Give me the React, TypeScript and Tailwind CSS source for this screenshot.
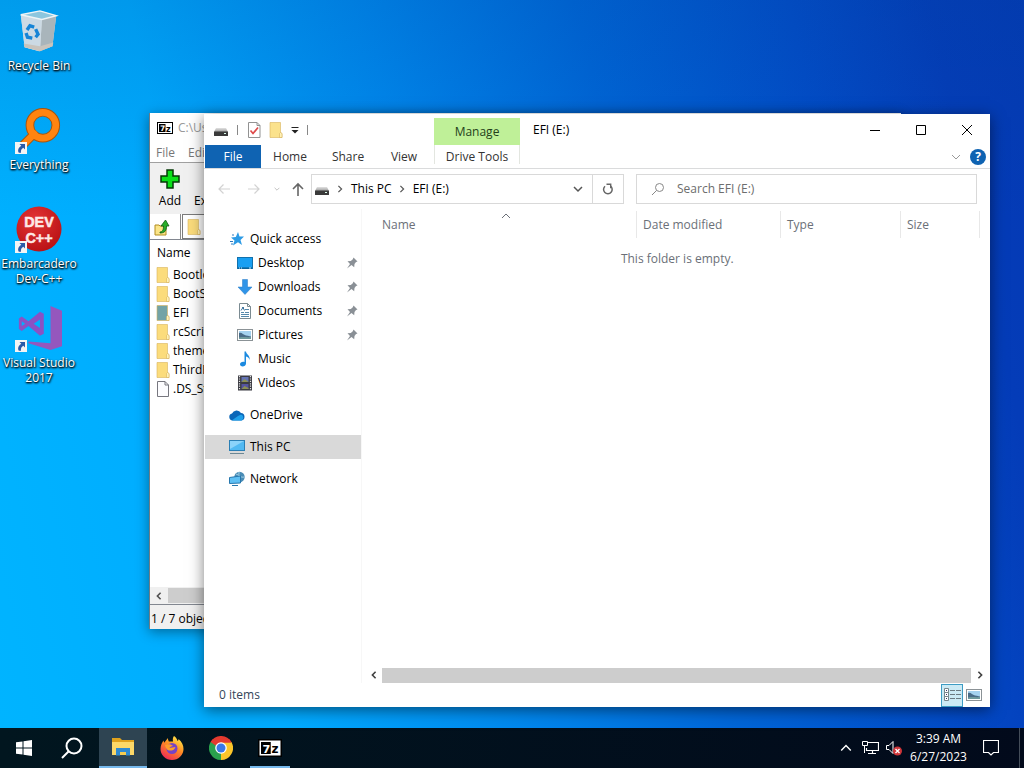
import type { ReactNode } from 'react';

const SevenZipIcon = ({ className }: { className?: string }) => (
  <svg viewBox="0 0 32 24" className={className}>
    <rect x="1" y="1" width="30" height="22" fill="#fff" stroke="#000" strokeWidth="2" />
    <rect x="4" y="4" width="13" height="16" fill="#000" />
    <text x="6" y="18" fontSize="15" fontWeight="900" fontFamily="DejaVu Sans" fill="#fff">7</text>
    <text x="18" y="19" fontSize="16" fontWeight="900" fontFamily="DejaVu Sans" fill="#000">z</text>
  </svg>
);

const DriveIcon = () => (
  <svg viewBox="0 0 16 16" className="h-4 w-4 shrink-0">
    <defs>
      <linearGradient id="drive" x1="0" y1="0" x2="0" y2="1">
        <stop offset="0" stopColor="#e2e2e2" />
        <stop offset="1" stopColor="#9a9a9a" />
      </linearGradient>
    </defs>
    <path d="M3 6h10l2 4H1z" fill="url(#drive)" />
    <rect x="1" y="9.500" width="14" height="4.500" rx="0.500" fill="#3a3a3a" />
    <rect x="11" y="11" width="2" height="1" fill="#dfe" />
  </svg>
);

const FolderIcon = ({ color = '#fbdc7c' }: { color?: string }) => (
  <svg viewBox="0 0 14 16" className="h-4 w-3.5 shrink-0">
    <path d="M1 0.500h10.500v10l1.500 1v4H1z" fill={color} stroke="#d8b45c" strokeWidth="0.600" />
    <path d="M11.500 10.500l1.500 1v4h-2.500v-4z" fill="#fff2b8" stroke="#d2a94c" strokeWidth="0.500" />
  </svg>
);

const FileIcon = () => (
  <svg viewBox="0 0 14 16" className="h-4 w-3.5 shrink-0">
    <path d="M1.500 0.500h7.500l3.500 3.500v11.500h-11z" fill="#fdfdff" stroke="#77777f" />
    <path d="M9 0.500v3.500h3.500" fill="none" stroke="#77777f" />
  </svg>
);

const ShortcutArrow = () => (
  <svg viewBox="0 0 12 12" className="absolute bottom-0 left-0 h-3 w-3">
    <rect width="12" height="12" fill="#f4f4f4" />
    <path d="M4.500 2h5.500v5.500L8.300 5.800C6.300 7 5.700 8.500 6 10.800H3.800C2.300 8.500 3.500 5.500 6.300 3.800z" fill="#2a5aa8" />
  </svg>
);

const RecycleBinIcon = () => (
  <svg viewBox="0 0 48 48" className="h-12 w-12">
    <path d="M5 7l21-4 16 5-4 32-14 5L9 41z" fill="#d5dde1" />
    <path d="M27 12l15-4-4 32-13 5z" fill="#a9b5bb" />
    <path d="M5 7l22 5-2 33L9 41z" fill="#ccdae4" />
    <path d="M5 7l20-4 17 5-15 4z" fill="#8cc6de" stroke="#eef4f6" strokeWidth="1.500" />
    <path d="M8 37l17 3 14-4-1 4-13 5-16-4z" fill="#c9c4bd" />
    <g fill="none" stroke="#1684d6" strokeWidth="3.500">
      <path d="M11.500 23l3-4.500 4.500 1.500" />
      <path d="M20.500 22l2.500 5.500-2.500 3" />
      <path d="M17 31.500l-5-1-1.500-4.500" />
    </g>
  </svg>
);

const EverythingIcon = () => (
  <svg viewBox="0 0 48 48" className="h-12 w-12">
    <path d="M18 29L6 41" stroke="#a8540c" strokeWidth="9" strokeLinecap="round" />
    <circle cx="28" cy="19" r="13.500" fill="none" stroke="#a8540c" strokeWidth="9" />
    <path d="M19 28L6 41" stroke="#ff8410" strokeWidth="7" strokeLinecap="round" />
    <circle cx="28" cy="19" r="13.500" fill="none" stroke="#ff8410" strokeWidth="7" />
  </svg>
);

const DevCppIcon = () => (
  <svg viewBox="0 0 48 48" className="h-12 w-12">
    <defs>
      <radialGradient id="dev" cx="0.4" cy="0.3" r="0.8">
        <stop offset="0" stopColor="#e33434" />
        <stop offset="1" stopColor="#b50e12" />
      </radialGradient>
    </defs>
    <circle cx="24" cy="24" r="23.500" fill="url(#dev)" />
    <g fill="#fde8e6" stroke="#fde8e6" strokeWidth="0.500" fontFamily="Liberation Sans" fontWeight="700" textAnchor="middle" fontSize="15">
      <text x="24" y="22">DEV</text>
      <text x="24" y="39">C++</text>
    </g>
  </svg>
);

const VisualStudioIcon = () => (
  <svg viewBox="0 0 48 48" className="h-12 w-12">
    <path d="M36 1l12 5v37l-12 4-23-7v-2l23 2z" fill="#9557bd" />
    <path fillRule="evenodd" d="M3 14l3-2 7 5L25 7l4 2v21l-4 2-12-10-7 5-3-2zm3 3v5l3.500-2.500zm19-2l-6.500 4.500L25 24z" fill="#8a52c4" />
  </svg>
);

const StarIcon = () => (
  <svg viewBox="0 0 16 16" className="h-4 w-4 shrink-0">
    <path d="M9 1l1.500 4.500L15 5.500l-3.500 3.500 1.500 5-4-2.800L4 14.500l1.500-5L2 6.500l4.800-.5z" fill="#2d9be5" />
    <path d="M1 10.500h3M2 13h2M3 4h2" stroke="#2d78be" />
  </svg>
);

const DesktopIcon = () => (
  <svg viewBox="0 0 16 16" className="h-4 w-4 shrink-0">
    <rect x="0.500" y="2.500" width="15" height="11" fill="#189ff2" stroke="#1171ad" />
    <path d="M1 13h14" stroke="#075585" />
    <path d="M2 13h1M4 13h1M12 13h2" stroke="#c3e8ff" />
  </svg>
);

const DownloadIcon = () => (
  <svg viewBox="0 0 16 16" className="h-4 w-4 shrink-0">
    <path d="M5.500 0.500h5v7.500H15l-7 7.500L1 8h4.500z" fill="#2f94e8" stroke="#2679c4" strokeWidth="0.500" />
  </svg>
);

const DocumentIcon = () => (
  <svg viewBox="0 0 16 16" className="h-4 w-4 shrink-0">
    <path d="M2.500 0.500h8l3 3v12h-11z" fill="#fff" stroke="#7b8b92" />
    <path d="M10.500 0.500v3h3" fill="none" stroke="#7b8b92" />
    <path d="M5 4.500h2M8 6.500h4M4 9.500h3M8 9.500h4M4 11.500h8M4 13.500h8" stroke="#5588aa" />
    <path d="M4 7.500L6 4.500l1.500 3" fill="none" stroke="#356f9c" />
  </svg>
);

const PictureIcon = () => (
  <svg viewBox="0 0 16 16" className="h-4 w-4 shrink-0">
    <rect x="0.500" y="2.500" width="15" height="11" fill="#fff" stroke="#8b9296" />
    <rect x="2" y="4" width="12" height="8" fill="#a5d2ef" />
    <path d="M2 6c3-1 4 2 7 2.500s3 .5 5 1V11H2z" fill="#4a6c88" />
    <path d="M2 10.500c4-1 8 0 12-.5v2H2z" fill="#6f9a9c" />
  </svg>
);

const MusicIcon = () => (
  <svg viewBox="0 0 16 16" className="h-4 w-4 shrink-0">
    <path d="M7.500 0.500h1.500c.2 3 4.500 4 3.500 8.500-.3-2-1.500-3-3.500-3.500v7C9 16 3 16.500 3 13.300c0-2 2.500-3 4.500-2.300z" fill="#1b8ae0" />
  </svg>
);

const VideoIcon = () => (
  <svg viewBox="0 0 16 16" className="h-4 w-4 shrink-0">
    <rect x="1" y="0.500" width="14" height="15" fill="#3b3b42" />
    <path d="M2.500 1v14M13.500 1v14" stroke="#e3e3e3" strokeWidth="1.200" strokeDasharray="1.200 1.200" />
    <rect x="4.500" y="2" width="7" height="5" fill="#6473b4" />
    <rect x="4.500" y="9" width="7" height="5" fill="#5655a0" />
    <path d="M4.500 7l3-3 4 3zM4.500 14l3-3 4 2v1z" fill="#8d9152" />
  </svg>
);

const OneDriveIcon = () => (
  <svg viewBox="0 0 16 16" className="h-4 w-4 shrink-0">
    <path d="M3.500 13.500A3.500 3.500 0 013 6.600 5 5 0 0112 6a3.800 3.800 0 01.5 7.500z" fill="#0a66b8" />
    <path d="M3 13.200L9 9l3-1.500a3.200 3.200 0 01.5 6H3.500z" fill="#1fa0ea" />
  </svg>
);

const ComputerIcon = () => (
  <svg viewBox="0 0 16 16" className="h-4 w-4 shrink-0">
    <rect x="0.500" y="1.500" width="15" height="10" fill="#51b9f2" stroke="#2a7fb5" />
    <path d="M1 2h14L1 10z" fill="#8bd3fa" />
    <path d="M1 14.500h14" stroke="#6c8794" />
  </svg>
);

const NetworkIcon = () => (
  <svg viewBox="0 0 16 16" className="h-4 w-4 shrink-0">
    <circle cx="10.500" cy="6" r="5.200" fill="#4a8cb5" />
    <path d="M7 3c3 1 5 4 8 3M10 1c-1 3 2 7 1 10" stroke="#a6d2e7" fill="none" />
    <path d="M0.500 6.500l11-1.500v7l-11 .5z" fill="#5fc0f4" stroke="#2777ad" />
    <path d="M3 14.500h6" stroke="#2777ad" />
  </svg>
);

const PinIcon = () => (
  <svg viewBox="0 0 12 12" className="h-3 w-3 shrink-0">
    <path d="M7.500 0.500l4 4-1.500.5L8.500 7l-.3 3.300L5.500 8 1 11.500 4 7 1.500 4.300l3.300-.3L6.800 2.300z" fill="#8a9096" />
  </svg>
);

const Chevron = ({ d, className, width = 1.5 }: { d: string; className: string; width?: number }) => (
  <svg viewBox="0 0 10 10" className={className}>
    <path d={d} fill="none" stroke="currentColor" strokeWidth={width} />
  </svg>
);

const LEFT = 'M7 1L3 5l4 4';
const RIGHT = 'M3 1l4 4-4 4';
const UP = 'M1 7l4-4 4 4';
const DOWN = 'M1 3l4 4 4-4';

const desktopItems: { label: string; icon: ReactNode; shortcut: boolean }[] = [
  { label: 'Recycle Bin', icon: <RecycleBinIcon />, shortcut: false },
  { label: 'Everything', icon: <EverythingIcon />, shortcut: true },
  { label: 'Embarcadero Dev-C++', icon: <DevCppIcon />, shortcut: true },
  { label: 'Visual Studio 2017', icon: <VisualStudioIcon />, shortcut: true },
];

const archiveRows = [
  { name: 'Bootloader', kind: 'folder' },
  { name: 'BootSector', kind: 'folder' },
  { name: 'EFI', kind: 'selected' },
  { name: 'rcScripts', kind: 'folder' },
  { name: 'themes', kind: 'folder' },
  { name: 'ThirdParty', kind: 'folder' },
  { name: '.DS_Store', kind: 'file' },
];

const quickAccess: { label: string; icon: ReactNode; pinned: boolean }[] = [
  { label: 'Desktop', icon: <DesktopIcon />, pinned: true },
  { label: 'Downloads', icon: <DownloadIcon />, pinned: true },
  { label: 'Documents', icon: <DocumentIcon />, pinned: true },
  { label: 'Pictures', icon: <PictureIcon />, pinned: true },
  { label: 'Music', icon: <MusicIcon />, pinned: false },
  { label: 'Videos', icon: <VideoIcon />, pinned: false },
];

function DesktopIcons() {
  return (
    <div className="flex w-[78px] flex-col pt-[7px]">
      {desktopItems.map((item) => (
        <button key={item.label} type="button" className="flex h-[99px] flex-col items-center gap-[3px]">
          <span className="relative h-12 w-12 shrink-0">
            <span className="flex h-12 w-12 items-center justify-center p-px">{item.icon}</span>
            {item.shortcut && <ShortcutArrow />}
          </span>
          <span className="text-center leading-[15px] text-white [text-shadow:1px_1px_2px_#000,0_1px_2px_#000]">{item.label}</span>
        </button>
      ))}
    </div>
  );
}

function ArchiveWindow() {
  return (
    <section className="absolute top-[113px] right-[123px] bottom-[99px] left-[149px] flex flex-col overflow-hidden border-l border-[#6f7b84] bg-[#f0f0f0] text-black shadow-[0_3px_12px_rgba(0,0,0,0.4)]">
      <header className="flex h-[30px] shrink-0 items-center gap-[5px] bg-white pl-[7px] text-[#999]">
        <SevenZipIcon className="h-3 w-4" />
        <span>C:\Users\</span>
      </header>
      <nav className="flex h-5 shrink-0 items-center gap-[13px] border-b border-[#a0a0a0] bg-white pl-1.5 text-[#777]">
        <button type="button">File</button>
        <button type="button">Edit</button>
      </nav>
      <div className="flex h-[51px] shrink-0 gap-3 pt-1.5 pl-2">
        <button type="button" className="flex w-6 flex-col items-center gap-1">
          <svg viewBox="0 0 20 20" className="h-5 w-5">
            <path d="M7 1h6v6h6v6h-6v6H7v-6H1V7h6z" fill="#0be01a" stroke="#043a07" strokeWidth="1.500" />
          </svg>
          Add
        </button>
        <button type="button" className="flex flex-col items-center justify-end pb-[5px]">Extract</button>
      </div>
      <div className="flex h-[26px] shrink-0 border-b border-[#828790] bg-white">
        <button type="button" aria-label="Up one level" className="flex w-[31px] items-center border-r border-[#8a8a8a] pl-1">
          <svg viewBox="0 0 16 18" className="h-[18px] w-4">
            <path d="M1 7h4l1 1h6v9H1z" fill="#fbe588" stroke="#b28d20" />
            <path d="M6 14c3 0 3.500-3 3.500-6H7l4.500-6L15 8h-2.500c0 5-2 7-6.500 7z" fill="#28ad28" stroke="#0d5b12" strokeWidth="0.800" />
          </svg>
        </button>
        <div className="ml-px flex flex-1 items-center border border-[#7a7a7a] pl-1">
          <FolderIcon />
        </div>
      </div>
      <div className="flex-1 bg-white">
        <table className="w-full">
          <thead>
            <tr className="h-[25px]">
              <th className="pl-[7px] text-left font-normal">Name</th>
            </tr>
          </thead>
          <tbody>
            {archiveRows.map((row) => (
              <tr key={row.name} className="h-[19px]">
                <td className="pl-1.5">
                  <div className="flex items-center gap-[3px]">
                    {row.kind === 'file' ? <FileIcon /> : <FolderIcon color={row.kind === 'selected' ? '#73a3a6' : '#fbdc7c'} />}
                    {row.name}
                  </div>
                </td>
              </tr>
            ))}
          </tbody>
        </table>
      </div>
      <div className="flex h-[17px] shrink-0 items-center bg-[#f0f0f0] text-[#505050]">
        <button type="button" aria-label="Scroll left" className="flex w-[18px] justify-center">
          <Chevron d={LEFT} className="h-2 w-2" width={2} />
        </button>
        <div className="h-[15px] w-96 bg-[#cdcdcd]" />
      </div>
      <footer className="flex h-[25px] shrink-0 items-center border-t border-[#828790] pt-1 pl-px">1 / 7 object(s) selected</footer>
    </section>
  );
}

function TitleBar() {
  return (
    <header className="flex h-[31px] shrink-0">
      <div className="flex w-[230px] items-center gap-2 pl-[9px]">
        <DriveIcon />
        <span className="h-2.5 w-px bg-[#888]" />
        <button type="button" aria-label="Properties" className="ml-px">
          <svg viewBox="0 0 14 16" className="h-4 w-3.5">
            <path d="M1.500 0.500h8.500l3 3v12H1.500z" fill="#fff" stroke="#929292" />
            <path d="M10 0.500v3h3" fill="none" stroke="#929292" />
            <path d="M3.500 8.500l2.500 3 5-6" fill="none" stroke="#de4a4a" strokeWidth="1.700" />
          </svg>
        </button>
        <button type="button" aria-label="New folder"><FolderIcon color="#fbe28c" /></button>
        <button type="button" aria-label="Customize Quick Access Toolbar">
          <svg viewBox="0 0 8 8" className="h-2 w-2">
            <path d="M0.500 1.500h7" stroke="#222" />
            <path d="M0.500 4h7L4 7.500z" fill="#222" />
          </svg>
        </button>
        <span className="h-2.5 w-px bg-[#888]" />
      </div>
      <div className="flex w-[86px] items-end">
        <div className="flex h-[27px] w-full items-center justify-center bg-[#bff098] text-[#24401a]">Manage</div>
      </div>
      <h1 className="flex-1 pl-[13px] leading-8">EFI (E:)</h1>
      <div className="flex">
        <button type="button" aria-label="Minimize" className="flex w-[46px] items-center justify-center">
          <svg viewBox="0 0 10 10" className="h-2.5 w-2.5"><path d="M0 5.500h10" stroke="#000" /></svg>
        </button>
        <button type="button" aria-label="Maximize" className="flex w-[46px] items-center justify-center">
          <svg viewBox="0 0 10 10" className="h-2.5 w-2.5"><path d="M.5.5h9v9h-9z" fill="none" stroke="#000" /></svg>
        </button>
        <button type="button" aria-label="Close" className="flex w-[46px] items-center justify-center">
          <svg viewBox="0 0 10 10" className="h-2.5 w-2.5"><path d="M0 0l10 10M10 0L0 10" stroke="#000" /></svg>
        </button>
      </div>
    </header>
  );
}

function Ribbon() {
  return (
    <nav className="flex h-6 shrink-0 border-b border-[#dadbdc] text-[#333]">
      <div className="flex w-[230px] pl-px">
        <button type="button" className="w-14 bg-[#0f63b2] text-white">File</button>
        <button type="button" className="w-[58px]">Home</button>
        <button type="button" className="w-[58px]">Share</button>
        <button type="button" className="w-[54px]">View</button>
      </div>
      <button type="button" className="mb-1 w-[86px] border-x border-[#e3e6e0] pt-1">Drive Tools</button>
      <div className="flex flex-1 items-center justify-end gap-[9px] pr-1">
        <button type="button" aria-label="Minimize the Ribbon" className="text-[#999]">
          <Chevron d={DOWN} className="h-2.5 w-2.5" width={1} />
        </button>
        <button type="button" aria-label="Help" className="h-4 w-4 rounded-full bg-[#0f63b2] leading-4 font-bold text-white">?</button>
      </div>
    </nav>
  );
}

function AddressRow() {
  return (
    <div className="flex h-10 shrink-0 items-center pr-[13px] text-[#666]">
      <div className="flex w-[107px] items-center gap-3.5 pl-3.5">
        <button type="button" aria-label="Back" className="text-[#d2d2d2]">
          <svg viewBox="0 0 12 12" className="h-3 w-3"><path d="M12 6H1M5.500 1.500L1 6l4.500 4.500" fill="none" stroke="currentColor" strokeWidth="1.200" /></svg>
        </button>
        <button type="button" aria-label="Forward" className="ml-1 text-[#d2d2d2]">
          <svg viewBox="0 0 12 12" className="h-3 w-3"><path d="M0 6h11M6.500 1.500L11 6l-4.500 4.500" fill="none" stroke="currentColor" strokeWidth="1.200" /></svg>
        </button>
        <button type="button" aria-label="Recent locations" className="text-[#bbb]">
          <Chevron d={DOWN} className="h-1.5 w-1.5" />
        </button>
        <button type="button" aria-label="Up" className="-ml-0.5">
          <svg viewBox="0 0 12 14" className="h-3.5 w-3"><path d="M6 14V2M1 7l5-5 5 5" fill="none" stroke="currentColor" strokeWidth="1.600" /></svg>
        </button>
      </div>
      <div className="flex h-[30px] flex-[278] items-center border border-[#d9d9d9] pl-0.5 text-black">
        <DriveIcon />
        <Chevron d={RIGHT} className="mx-1.5 h-2 w-2 text-[#555]" />
        <button type="button" className="pl-px">This PC</button>
        <Chevron d={RIGHT} className="mx-1.5 h-2 w-2 text-[#555]" />
        <button type="button" className="pl-px">EFI (E:)</button>
        <button type="button" aria-label="Previous locations" className="mr-[9px] ml-auto text-[#555]">
          <Chevron d={DOWN} className="h-2.5 w-2.5" />
        </button>
      </div>
      <button type="button" aria-label="Refresh" className="-ml-px flex h-[30px] w-8 items-center justify-center border border-[#d9d9d9]">
        <svg viewBox="0 0 12 12" className="h-3 w-3">
          <path d="M3 3.200A4.300 4.300 0 108.500 3" fill="none" stroke="currentColor" strokeWidth="1.500" />
          <path d="M4.500 1.200h4.200v4" fill="none" stroke="currentColor" strokeWidth="1.400" />
        </svg>
      </button>
      <label className="ml-3 flex h-[30px] flex-[325] items-center gap-3 border border-[#d9d9d9] pl-3.5">
        <svg viewBox="0 0 14 14" className="h-3.5 w-3.5 shrink-0">
          <circle cx="8.500" cy="5.500" r="4" fill="none" stroke="#888" />
          <path d="M5.500 8.500L1 13" stroke="#888" />
        </svg>
        <input type="text" aria-label="Search" placeholder="Search EFI (E:)" className="w-full min-w-0 outline-none placeholder:text-[#6d6d6d]" />
      </label>
    </div>
  );
}

function NavItem({ icon, label, pinned, nested, active }: { icon: ReactNode; label: string; pinned?: boolean; nested?: boolean; active?: boolean }) {
  return (
    <button
      type="button"
      className={`flex h-6 w-full items-center gap-[5px] pr-[3px] text-left ${nested ? 'pl-8' : 'pl-6'} ${active ? 'bg-[#d9d9d9]' : ''}`}
    >
      {icon}
      <span className="flex-1">{label}</span>
      {pinned && <PinIcon />}
    </button>
  );
}

function ExplorerWindow() {
  return (
    <section className="absolute top-[114px] right-[34px] bottom-[21px] left-[204px] flex flex-col bg-white text-black shadow-[0_3px_14px_rgba(0,0,0,0.5)]">
      <TitleBar />
      <Ribbon />
      <AddressRow />
      <div className="flex flex-1">
        <nav className="flex w-[158px] shrink-0 flex-col gap-2 border-r border-[#f7f7f7] pt-[18px] pl-px">
          <div>
            <NavItem icon={<StarIcon />} label="Quick access" />
            {quickAccess.map((item) => (
              <NavItem key={item.label} icon={item.icon} label={item.label} pinned={item.pinned} nested />
            ))}
          </div>
          <NavItem icon={<OneDriveIcon />} label="OneDrive" />
          <NavItem icon={<ComputerIcon />} label="This PC" active />
          <NavItem icon={<NetworkIcon />} label="Network" />
        </nav>
        <div className="flex flex-1 flex-col pl-[3px]">
          <div className="flex-1 pt-0.5 pr-2.5">
            <table className="w-full table-fixed border-collapse text-[#6b7078]">
              <thead>
                <tr className="h-[27px] text-left">
                  <th className="relative border-r border-[#e8e8e8] pl-[17px] font-normal">
                    Name
                    <Chevron d={UP} className="absolute top-0 left-1/2 h-2.5 w-2.5" width={1} />
                  </th>
                  <th className="w-36 border-r border-[#e8e8e8] pl-1.5 font-normal">Date modified</th>
                  <th className="w-[120px] border-r border-[#e8e8e8] pl-1.5 font-normal">Type</th>
                  <th className="w-[79px] border-r border-[#e8e8e8] pl-1.5 font-normal">Size</th>
                </tr>
              </thead>
              <tbody>
                <tr>
                  <td colSpan={4} className="h-[42px] pl-2.5 text-center">This folder is empty.</td>
                </tr>
              </tbody>
            </table>
          </div>
          <div className="flex h-4 shrink-0 items-center pr-0.5 text-[#404040]">
            <button type="button" aria-label="Scroll left" className="flex w-[17px] justify-center">
              <Chevron d={LEFT} className="h-2 w-2" width={2} />
            </button>
            <div className="h-[15px] flex-1 bg-[#cdcdcd]" />
            <button type="button" aria-label="Scroll right" className="flex w-[17px] justify-center">
              <Chevron d={RIGHT} className="h-2 w-2" width={2} />
            </button>
          </div>
        </div>
      </div>
      <footer className="flex h-6 shrink-0 items-center gap-[3px] pr-2 pl-[15px] text-[#34465a]">
        <span className="flex-1">0 items</span>
        <button type="button" aria-label="Details view" className="flex h-[23px] w-[22px] items-center justify-center border border-[#3d9cc4] bg-[#cbeaf5]">
          <svg viewBox="0 0 17 14" className="h-3.5 w-[17px]">
            <path d="M.5.5h4v4h-4zM.5 4.500h4v4h-4zM.5 8.500h4v4h-4z" fill="#fff" stroke="#77868d" />
            <path d="M2 2.500h1M2 6.500h1M2 10.500h1" stroke="#336" />
            <path d="M6 2.500h5M12 2.500h5M6 6.500h5M12 6.500h5M6 10.500h5M12 10.500h5" stroke="#6b7a82" />
          </svg>
        </button>
        <button type="button" aria-label="Large icons view"><PictureIcon /></button>
      </footer>
    </section>
  );
}

const FirefoxIcon = () => (
  <svg viewBox="0 0 24 24" className="h-6 w-6">
    <defs>
      <linearGradient id="fox" x1="0.8" y1="0" x2="0.2" y2="1">
        <stop offset="0" stopColor="#fff04a" />
        <stop offset="0.45" stopColor="#ff8b24" />
        <stop offset="1" stopColor="#ee2159" />
      </linearGradient>
    </defs>
    <path d="M14 0c2 1 3 3 3.500 5 1-.5 1-1.500 1-2C22 6 23.500 9 23.500 13a11.500 11 0 01-23 0C.5 9.500 2 6.500 3.500 4.500l.7 2.200C5.500 5 7 3.500 7.500 2l1.300 3.500L13 5.500C12.500 3 13 1 14 0z" fill="url(#fox)" />
    <circle cx="12" cy="12.500" r="5.500" fill="#7543c8" />
    <path d="M5 9c3-1 6-1 8 1-2 0-3 1-3.500 2 2 0 4-1 6-1-1 3-3 3.500-6 3.500-2 0-4-2-4.500-5.500z" fill="#ff9d2b" />
  </svg>
);

const ChromeIcon = () => (
  <svg viewBox="0 0 24 24" className="h-6 w-6">
    <path d="M12 12L1.600 6A12 12 0 0122.400 6z" fill="#e43a2f" />
    <path d="M12 12l10.400-6A12 12 0 0112 24z" fill="#fcc52a" />
    <path d="M12 12v12A12 12 0 011.600 6z" fill="#2aa14d" />
    <path d="M12 6.500h10.600L17 15z" fill="#fcc52a" />
    <path d="M1.600 6L7 15l5-3V6.500z" fill="#2aa14d" />
    <path d="M1.600 6l5.600 6L12 6.500h10.600L20 3H4z" fill="#e43a2f" />
    <path d="M1.600 6L7 15l3 .5-2-5z" fill="#2aa14d" />
    <circle cx="12" cy="12" r="5.800" fill="#fff" />
    <circle cx="12" cy="12" r="4.500" fill="#3b78e7" />
  </svg>
);

function Taskbar() {
  return (
    <footer className="flex h-10 shrink-0 bg-linear-to-r from-[#01161f] to-[#020a1b] text-white">
      <button type="button" aria-label="Start" className="flex w-12 items-center justify-center">
        <svg viewBox="0 0 16 16" className="h-4 w-4">
          <path d="M0 2.300L6.500 1.400v6.100H0zM7.500 1.300L16 0v7.500H7.500zM0 8.500h6.500v6.100L0 13.700zM7.500 8.500H16V16l-8.500-1.200z" fill="#fff" />
        </svg>
      </button>
      <button type="button" aria-label="Search" className="mr-[3px] flex w-12 items-center justify-center">
        <svg viewBox="0 0 22 22" className="h-[22px] w-[22px]">
          <circle cx="13" cy="9" r="7.500" fill="none" stroke="#fff" strokeWidth="2" />
          <path d="M7.500 14.500L1 21" stroke="#fff" strokeWidth="2" />
        </svg>
      </button>
      <div className="flex gap-px">
        <button type="button" aria-label="File Explorer" className="flex w-12 items-center justify-center border-b-2 border-[#76b9ed] bg-[#2e4452]">
          <svg viewBox="0 0 22 20" className="h-5 w-[22px]">
            <path d="M0 1h8l2 2h12v5H0z" fill="#e0a21d" />
            <path d="M0 5h22v13H0z" fill="#fcd868" />
            <path d="M4 11h14v7.500h-4V15H8v3.500H4z" fill="#2f8ad0" />
            <path d="M8 15h6v3H8z" fill="#f6cc50" />
          </svg>
        </button>
        <button type="button" aria-label="Firefox" className="flex w-12 items-center justify-center"><FirefoxIcon /></button>
        <button type="button" aria-label="Chrome" className="flex w-12 items-center justify-center"><ChromeIcon /></button>
        <button type="button" aria-label="7-Zip" className="flex w-12 flex-col items-center justify-end gap-[9px]">
          <SevenZipIcon className="h-[18px] w-6" />
          <span className="h-0.5 w-10 bg-[#76b9ed]" />
        </button>
      </div>
      <div className="ml-auto flex items-center">
        <button type="button" aria-label="Show hidden icons" className="flex w-6 justify-center">
          <Chevron d={UP} className="h-3 w-3" width={1.2} />
        </button>
        <button type="button" aria-label="Network status" className="flex w-6 justify-center">
          <svg viewBox="0 0 17 16" className="h-4 w-[17px]" fill="none" stroke="#fff">
            <path d="M6 2.500h10.500v8H4.500V8M10.500 10.500v3M6 13.500h8" strokeWidth="1.200" />
            <path d="M.5 1.500h5v4h-5zM2.500 5.500v7.500" />
          </svg>
        </button>
        <button type="button" aria-label="Volume muted" className="flex w-6 justify-center">
          <svg viewBox="0 0 16 16" className="h-4 w-4">
            <path d="M.5 5.500H3l4-4v12l-4-4H.5z" fill="none" stroke="#fff" />
            <circle cx="11.500" cy="11" r="4.500" fill="#cf3539" />
            <path d="M9.500 9l4 4M13.500 9l-4 4" stroke="#fff" strokeWidth="1.300" />
          </svg>
        </button>
        <time className="w-[65px] text-center leading-[18px]">
          3:39 AM
          <br />
          6/27/2023
        </time>
        <button type="button" aria-label="Notifications" className="flex w-10 items-center justify-center">
          <svg viewBox="0 0 16 16" className="h-4 w-4">
            <path d="M.5.5h15v12h-5L8 15l-2.500-2.500h-5z" fill="none" stroke="#fff" strokeWidth="1.200" />
          </svg>
        </button>
        <button type="button" aria-label="Show desktop" className="ml-2 h-10 w-[5px] border-l border-[#444d59]" />
      </div>
    </footer>
  );
}

export default function App() {
  return (
    <div className="flex h-screen flex-col overflow-hidden font-['Open_Sans',sans-serif] text-xs">
      <main className="relative flex-1 bg-[linear-gradient(180deg,rgba(0,70,150,0.18)_0%,rgba(0,70,150,0)_30%),linear-gradient(78deg,#00b4ff_0%,#00abff_24%,#0088ee_44%,#0066d8_62%,#024cc8_80%,#043cb8_92%,#0439b4_100%)]">
        <DesktopIcons />
        <ArchiveWindow />
        <ExplorerWindow />
      </main>
      <Taskbar />
    </div>
  );
}
